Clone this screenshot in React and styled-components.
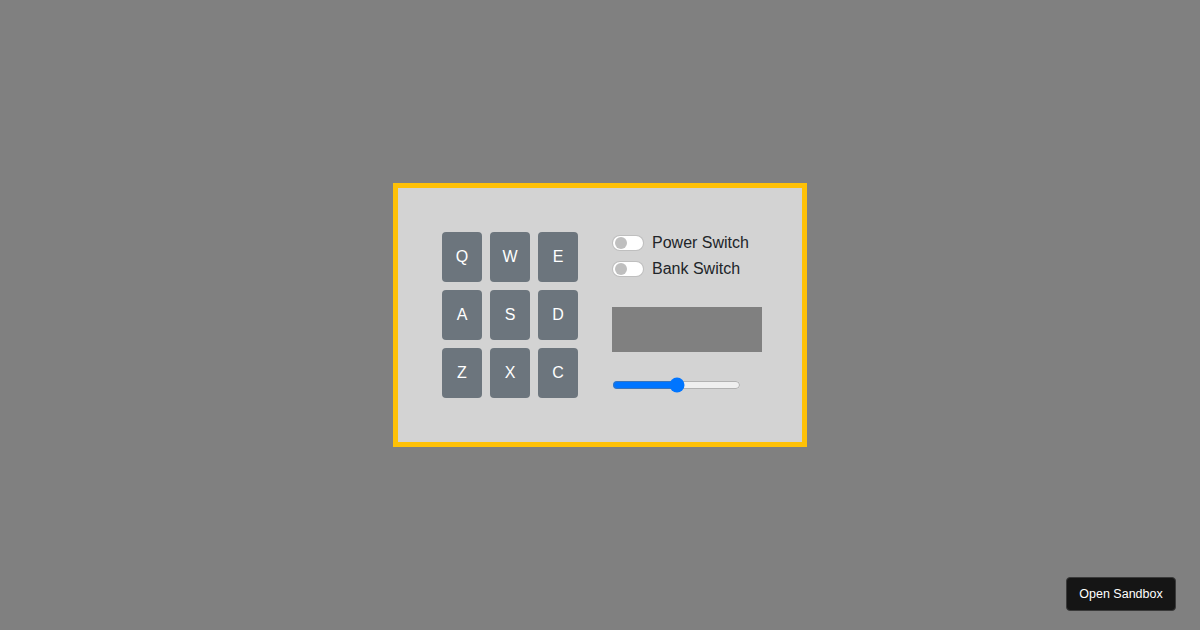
import React from "react";
import styled, { createGlobalStyle } from "styled-components";

const Global = createGlobalStyle`
  html, body { margin: 0; padding: 0; }
  body {
    background: #808080;
    font-family: "Liberation Sans", Arial, sans-serif;
    color: #212529;
  }
`;

const Page = styled.div`
  height: 630px;
  display: flex;
  align-items: center;
  justify-content: center;
`;

const Machine = styled.div`
  box-sizing: border-box;
  width: 414px;
  height: 264px;
  border: 5px solid #ffc107;
  background: #d3d3d3;
  display: flex;
  align-items: flex-start;
  padding: 42px 0 0 44px;
  gap: 34px;
`;

const PadGrid = styled.div`
  display: grid;
  grid-template-columns: repeat(3, 40px);
  grid-auto-rows: 50px;
  gap: 8px;
  margin-top: 2px;
`;

const Pad = styled.button`
  border: none;
  border-radius: 4px;
  background: #6c757d;
  color: #fff;
  font-family: "Liberation Sans", Arial, sans-serif;
  font-size: 16px;
  padding: 0;
  display: flex;
  align-items: center;
  justify-content: center;
  cursor: pointer;
`;

const Controls = styled.div`
  width: 150px;
  display: flex;
  flex-direction: column;
  margin-top: 1px;
`;

const SwitchRow = styled.label`
  display: flex;
  align-items: center;
  gap: 8px;
  height: 24px;
  margin-bottom: 2px;
  font-size: 16px;
  line-height: 24px;
  color: #212529;
`;

const Toggle = styled.span`
  box-sizing: border-box;
  width: 32px;
  height: 16px;
  border-radius: 8px;
  border: 1px solid rgba(0, 0, 0, 0.25);
  background: #fff;
  position: relative;
  flex: none;
  &::after {
    content: "";
    position: absolute;
    left: 2px;
    top: 1px;
    width: 12px;
    height: 12px;
    border-radius: 50%;
    background: #bfbfbf;
  }
`;

const Display = styled.div`
  width: 150px;
  height: 45px;
  background: #808080;
  margin-top: 24px;
`;

const Volume = styled.input`
  width: 129px;
  height: 16px;
  margin: 25px 0 0 0;
  accent-color: #0075ff;
`;

const SandboxButton = styled.button`
  position: fixed;
  right: 24px;
  bottom: 19px;
  box-sizing: border-box;
  width: 110px;
  height: 34px;
  padding: 0;
  background: #151515;
  color: #fff;
  border: 1px solid #3a3a3a;
  border-radius: 4px;
  font-family: "Liberation Sans", Arial, sans-serif;
  font-size: 12.5px;
`;

const keys = ["Q", "W", "E", "A", "S", "D", "Z", "X", "C"];

export default function App() {
  return (
    <>
      <Global />
      <Page>
        <Machine>
          <PadGrid>
            {keys.map((k) => (
              <Pad key={k}>{k}</Pad>
            ))}
          </PadGrid>
          <Controls>
            <SwitchRow>
              <Toggle />
              Power Switch
            </SwitchRow>
            <SwitchRow>
              <Toggle />
              Bank Switch
            </SwitchRow>
            <Display />
            <Volume type="range" min="0" max="100" defaultValue="50" />
          </Controls>
        </Machine>
      </Page>
      <SandboxButton>Open Sandbox</SandboxButton>
    </>
  );
}
